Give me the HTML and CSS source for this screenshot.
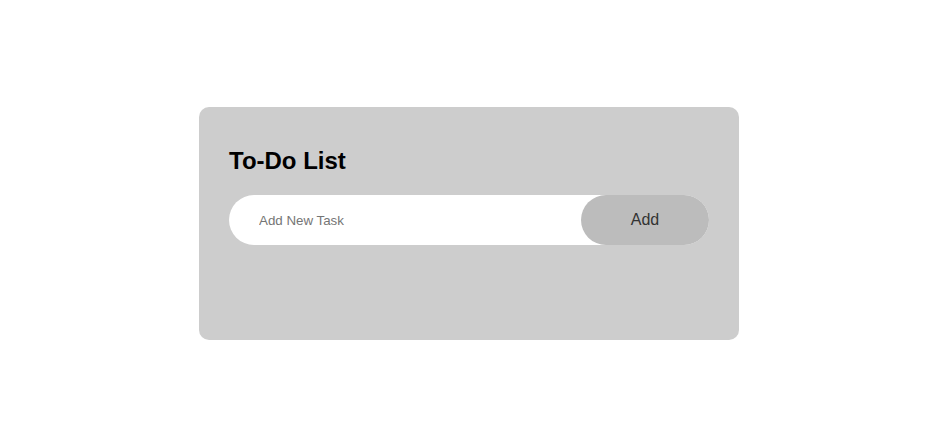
FILE: index.html
```html
<!DOCTYPE html>
<html>
<head>
<meta charset="utf-8">
<link rel="stylesheet" href="styles.css">
</head>
<body>
<div class="page">
  <div class="card">
    <h2 class="title">To-Do List</h2>
    <div class="row">
      <input class="task-input" type="text" placeholder="Add New Task">
      <button class="add-btn">Add</button>
    </div>
  </div>
</div>
</body>
</html>
```
FILE: styles.css
```css
html, body {
  margin: 0;
  padding: 0;
  background: #fff;
  font-family: "Liberation Sans", Arial, sans-serif;
}
.page {
  width: 944px;
  height: 448px;
  display: flex;
  align-items: center;
  justify-content: center;
  padding: 0 6px 1px 0;
  box-sizing: border-box;
}
.card {
  width: 540px;
  box-sizing: border-box;
  background: #cdcdcd;
  border-radius: 10px;
  padding: 40px 30px 95px;
}
.title {
  margin: 0 0 20px;
  font-size: 24px;
  line-height: 28px;
  font-weight: 700;
  color: #000;
}
.row {
  position: relative;
  height: 50px;
}
.task-input {
  display: block;
  width: 100%;
  height: 50px;
  box-sizing: border-box;
  border: none;
  outline: none;
  border-radius: 25px;
  background: #fff;
  padding: 0 30px;
  font-family: "Liberation Sans", Arial, sans-serif;
  font-size: 13.333px;
  color: #333;
}
.task-input::placeholder {
  color: #757575;
}
.add-btn {
  position: absolute;
  top: 0;
  right: 0;
  width: 128px;
  height: 50px;
  border: none;
  border-radius: 25px;
  background: #bcbcbc;
  color: #333;
  font-family: "Liberation Sans", Arial, sans-serif;
  font-size: 16px;
  cursor: pointer;
}
```
